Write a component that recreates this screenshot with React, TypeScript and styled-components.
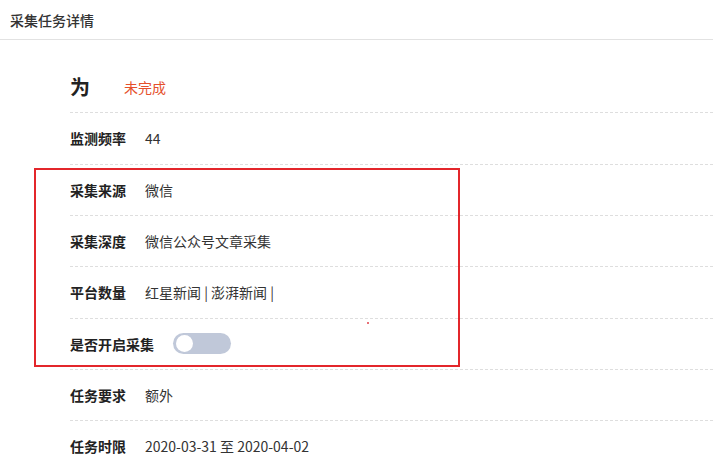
import React from "react";
import styled, { createGlobalStyle } from "styled-components";

const Global = createGlobalStyle`
  html, body { margin: 0; padding: 0; background: #fff; }
  body { font-family: "Noto Sans CJK SC", "Noto Sans", sans-serif; color: #333; }
  * { box-sizing: border-box; }
`;

const Page = styled.div`
  position: relative;
  width: 713px;
  height: 470px;
  overflow: hidden;
`;

const Header = styled.div`
  height: 40px;
  display: flex;
  align-items: center;
  padding-left: 10px;
  border-bottom: 1px solid #e2e2e2;
  font-size: 14px;
  color: #333;
  font-weight: 500;
`;

const Content = styled.div`
  padding: 22px 0 0 70px;
`;

const Row = styled.div<{ $first?: boolean }>`
  display: flex;
  align-items: center;
  gap: 19px;
  height: 51.33px;
  border-bottom: 1px dashed #dedede;
  font-size: 14px;
  line-height: 20px;
`;

const TitleRow = styled(Row)`
  gap: 34px;
`;

const BigTitle = styled.span`
  font-size: 20px;
  font-weight: 700;
  color: #222;
`;

const Status = styled.span`
  color: #e5502c;
  font-size: 14px;
`;

const Label = styled.span`
  font-weight: 700;
  color: #222;
`;

const Value = styled.span`
  color: #333;
  font-family: "Noto Sans CJK SC", "Noto Sans", sans-serif;
`;

const Switch = styled.span`
  position: relative;
  display: inline-block;
  width: 58px;
  height: 21px;
  border-radius: 11px;
  background: #c0c8d9;
`;

const Knob = styled.span`
  position: absolute;
  left: 3px;
  top: 2px;
  width: 17px;
  height: 17px;
  border-radius: 50%;
  background: #fff;
`;

const Highlight = styled.div`
  position: absolute;
  left: 34px;
  top: 168px;
  width: 426px;
  height: 199px;
  border: 2px solid #e3262b;
  pointer-events: none;
`;

const Dot = styled.div`
  position: absolute;
  left: 367px;
  top: 322px;
  width: 2px;
  height: 2px;
  border-radius: 1px;
  background: #e0404a;
`;

const rows: { label: string; value?: string }[] = [
  { label: "监测频率", value: "44" },
  { label: "采集来源", value: "微信" },
  { label: "采集深度", value: "微信公众号文章采集" },
  { label: "平台数量", value: "红星新闻 | 澎湃新闻 |" },
  { label: "是否开启采集" },
  { label: "任务要求", value: "额外" },
  { label: "任务时限", value: "2020-03-31 至 2020-04-02" },
];

export default function App() {
  return (
    <Page>
      <Global />
      <Header>采集任务详情</Header>
      <Content>
        <TitleRow>
          <BigTitle>为</BigTitle>
          <Status>未完成</Status>
        </TitleRow>
        {rows.map((r) => (
          <Row key={r.label}>
            <Label>{r.label}</Label>
            {r.value !== undefined ? (
              <Value>{r.value}</Value>
            ) : (
              <Switch>
                <Knob />
              </Switch>
            )}
          </Row>
        ))}
      </Content>
      <Highlight />
      <Dot />
    </Page>
  );
}
